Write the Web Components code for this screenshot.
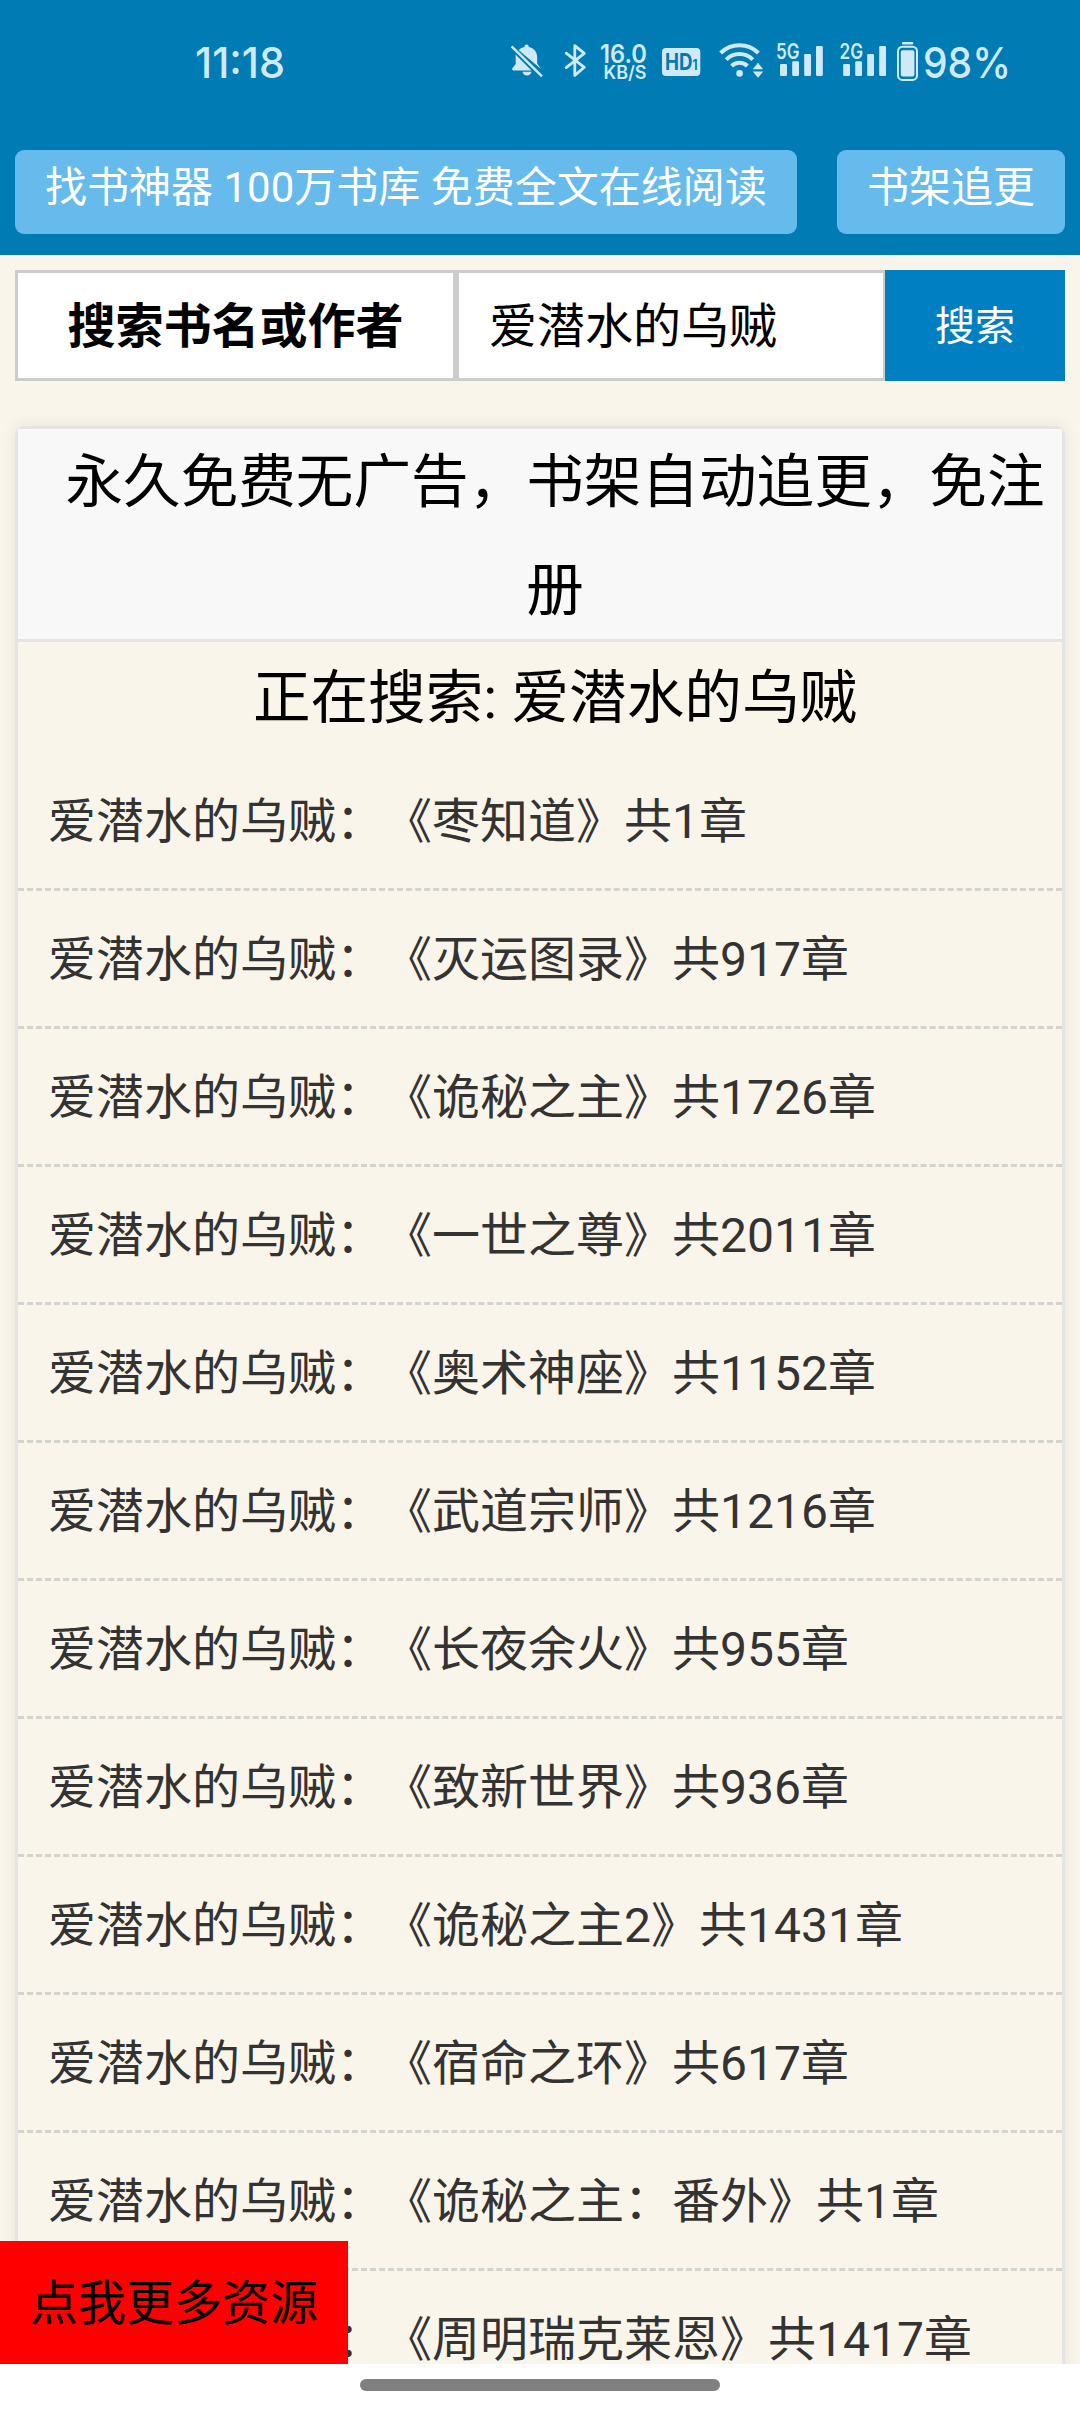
<!DOCTYPE html>
<html lang="zh-CN">
<head>
<meta charset="utf-8">
<title>找书神器</title>
<style>
    html{
        background-color: #fff;
    }
    body{
        margin: 0;
        font-family: Roboto, "Noto Sans CJK SC", sans-serif;
        font-size: 48px;
        color: #000;
        text-spacing-trim: space-all;
        overflow: hidden;
    }
</style>
</head>
<body>
<reader-app></reader-app>

<script>
class BaseElement extends HTMLElement {
    constructor(){
        super();
        this.attachShadow({mode:'open'});
        let template = document.createElement('template');
        template.innerHTML = this.getHTMLAsString();
        this.shadowRoot.appendChild(template.content.cloneNode(true));
    }
}

class StatusBar extends BaseElement {
    getHTMLAsString(){
        return `
        <style>
            :host{
                display: flex;
                justify-content: space-between;
                height: 60px;
                padding: 30px 68px 60px 190px;
            }
            .icons{ display: flex; }
            svg{
                display: block;
                height: 60px;
                fill: #cfeaf6;
                font-family: Inter, sans-serif;
            }
            .line{
                fill: none;
                stroke: #cfeaf6;
            }
        </style>
        <svg width="100" viewBox="190 30 100 60">
            <text x="195" y="77.5" font-size="43" font-weight="500" textLength="90" lengthAdjust="spacingAndGlyphs">11:18</text>
        </svg>
        <div class="icons">
            <svg width="50" viewBox="505 30 50 60">
                <path d="M518.8 50.2c1.4-1.6 3.4-2.7 5.7-3.1v-.6a2.1 2.1 0 0 1 4.2 0v.6c5.2 1 8.5 5 8.5 10.3v6.2l3.8 5.4zM515.5 54.5L531.5 70.5H513.6a1.4 1.4 0 0 1-1.2-2.2l3.3-4.4v-7c0-.8 0-1.6-.2-2.4zM522.5 71.8h9a4.6 4.6 0 0 1-9 0z"/>
                <path class="line" d="M511.6 46.4L542 76.3" stroke-width="2.4"/>
            </svg>
            <svg width="40" viewBox="555 30 40 60">
                <path class="line" d="M566.2 53.2L584.3 67.3 574.8 75.4V45.6L584.3 53.4 566.2 67.6" stroke-width="2.8" stroke-linejoin="round" stroke-linecap="round"/>
            </svg>
            <svg width="60" viewBox="595 30 60 60">
                <text x="600" y="62.6" font-size="25" font-weight="600" textLength="47" lengthAdjust="spacingAndGlyphs">16.0</text>
                <text x="603.5" y="79.2" font-size="18" font-weight="600" textLength="43" lengthAdjust="spacingAndGlyphs">KB/S</text>
            </svg>
            <svg width="55" viewBox="655 30 55 60">
                <rect x="662" y="48" width="38.3" height="28" rx="4"/>
                <text x="665" y="70" font-size="22.5" font-weight="700" textLength="32.5" lengthAdjust="spacingAndGlyphs" fill="#007bb3">HD<tspan font-size="14">1</tspan></text>
            </svg>
            <svg width="60" viewBox="710 30 60 60">
                <g class="line" stroke-width="4">
                    <path d="M720.6 53a27 27 0 0 1 37.8 0"/>
                    <path d="M726.2 59.6a18.6 18.6 0 0 1 26.6 0"/>
                    <path d="M731.6 66a11.4 11.4 0 0 1 15.8 0"/>
                </g>
                <circle cx="739.6" cy="73.4" r="3.3"/>
                <path d="M752.8 69.2L758 62.8 763.2 69.2zM752.8 71.6L758 77.8 763.2 71.6z"/>
            </svg>
            <svg width="62" viewBox="770 30 62 60">
                <text x="776" y="59.3" font-size="21.5" font-weight="600" textLength="23.5" lengthAdjust="spacingAndGlyphs">5G</text>
                <rect x="780" y="64" width="7" height="12" rx="1.2"/>
                <rect x="792.2" y="61.2" width="6.8" height="14.8" rx="1.2"/>
                <rect x="804.2" y="54" width="6.8" height="22" rx="1.2"/>
                <rect x="816" y="46" width="6.8" height="30" rx="1.2"/>
            </svg>
            <svg width="60" viewBox="832 30 60 60">
                <text x="839.5" y="59.3" font-size="21.5" font-weight="600" textLength="23.5" lengthAdjust="spacingAndGlyphs">2G</text>
                <rect x="843.2" y="64" width="6.8" height="12" rx="1.2"/>
                <rect x="855.2" y="61.2" width="6.8" height="14.8" rx="1.2"/>
                <rect x="867.2" y="54" width="6.8" height="22" rx="1.2"/>
                <rect x="879.2" y="46" width="6.8" height="30" rx="1.2"/>
            </svg>
            <svg width="30" viewBox="892 30 30 60">
                <rect x="902" y="42" width="11.3" height="2.4" rx=".8"/>
                <rect class="line" x="898" y="46.7" width="19" height="33.2" rx="4.5" stroke-width="2"/>
                <rect x="900.8" y="50.2" width="13.6" height="26.4" rx="2"/>
            </svg>
            <svg width="90" viewBox="922 30 90 60">
                <text x="923" y="77.8" font-size="43" font-weight="500" textLength="88" lengthAdjust="spacingAndGlyphs">98%</text>
            </svg>
        </div>
        `
    }
}

class PillLink extends BaseElement {
    getHTMLAsString(){
        return `
        <style>
            :host{
                display: block;
                box-sizing: border-box;
                height: 84px;
                padding: 0 30px;
                border-radius: 9px;
                background-color: #66baec;
                color: #fff;
                font-size: 42px;
                line-height: 75px;
                white-space: nowrap;
            }
        </style>
        <slot></slot>
        `
    }
}

class SiteHeader extends BaseElement {
    getHTMLAsString(){
        return `
        <style>
            :host{
                display: block;
                height: 255px;
                background-color: #007bb3;
            }
            nav{
                display: flex;
                justify-content: space-between;
                padding: 0 15px;
            }
        </style>
        <status-bar></status-bar>
        <nav><slot></slot></nav>
        `
    }
}

class SearchForm extends BaseElement {
    getHTMLAsString(){
        return `
        <style>
            :host{
                display: grid;
                grid-template-columns: 441px 429px 180px;
                grid-template-rows: 111px;
                height: 111px;
                margin: 15px 15px 45px;
                line-height: 107px;
            }
            .type, .word{
                box-sizing: border-box;
                height: 111px;
                border: 3px solid #ccc;
                background-color: #fff;
            }
            .type{
                font-weight: bold;
                text-align: center;
            }
            .word{
                padding-left: 30px;
                border-right-width: 2px;
            }
            .submit{
                background-color: #0080c3;
                color: #fff;
                font-size: 40px;
                line-height: 114px;
                height: 111px;
                text-align: center;
            }
        </style>
        <div class="type"><slot name="type"></slot></div>
        <div class="word"><slot name="word"></slot></div>
        <div class="submit"><slot name="submit"></slot></div>
        `
    }
}

class ResultPanel extends BaseElement {
    getHTMLAsString(){
        return `
        <style>
            :host{
                display: block;
                margin: 0 15px;
                border: 3px solid #e4e4e4;
                border-radius: 9px;
                box-shadow: 0 0 15px rgba(0,0,0,0.08);
            }
            .notice, .title{
                padding-left: 30px;
                font-size: 57.6px;
                line-height: 108px;
                text-align: center;
            }
            .notice{
                height: 210px;
                border-bottom: 3px solid #e4e4e4;
                background-color: #f8f8f8;
            }
            .title{
                height: 111px;
                line-height: 113px;
            }
        </style>
        <div class="notice"><slot name="notice"></slot></div>
        <div class="title"><slot name="title"></slot></div>
        <slot></slot>
        `
    }
}

class BookRow extends BaseElement {
    getHTMLAsString(){
        return `
        <style>
            :host{
                display: block;
                height: 135px;
                padding-left: 30px;
                border-bottom: 3px dashed #d3d3d0;
                color: #333;
                line-height: 137px;
                white-space: nowrap;
            }
        </style>
        <slot></slot>
        `
    }
}

class MoreButton extends BaseElement {
    getHTMLAsString(){
        return `
        <style>
            /* floats over the list, in the bottom left corner */
            :host{
                position: absolute;
                left: 0;
                bottom: 0;
                height: 123px;
                padding: 0 30px;
                background-color: #f00;
                line-height: 125px;
            }
        </style>
        <slot></slot>
        `
    }
}

class HomeBar extends BaseElement {
    getHTMLAsString(){
        return `
        <style>
            :host{
                display: flex;
                justify-content: center;
                align-items: center;
                height: 48px;
                background-color: #fff;
            }
            .handle{
                width: 360px;
                height: 12px;
                margin-bottom: 6px;
                border-radius: 6px;
                background-color: #808080;
            }
        </style>
        <div class="handle"></div>
        `
    }
}

class ReaderApp extends BaseElement {
    getHTMLAsString(){
        let author = '爱潜水的乌贼';
        let books = [
            ['枣知道', 1],
            ['灭运图录', 917],
            ['诡秘之主', 1726],
            ['一世之尊', 2011],
            ['奥术神座', 1152],
            ['武道宗师', 1216],
            ['长夜余火', 955],
            ['致新世界', 936],
            ['诡秘之主2', 1431],
            ['宿命之环', 617],
            ['诡秘之主：番外', 1],
            ['周明瑞克莱恩', 1417]
        ];
        let rows = books.map(([name, count]) => `<book-row>${author}：《${name}》共${count}章</book-row>`).join('');
        return `
        <style>
            :host{
                display: flex;
                flex-direction: column;
                width: 1080px;
                height: 2412px;
            }
            main{
                position: relative;
                height: 2364px;
                overflow: hidden;
                background-color: #faf5eb;
            }
        </style>
        <main>
            <site-header>
                <pill-link>找书神器 100万书库 免费全文在线阅读</pill-link>
                <pill-link>书架追更</pill-link>
            </site-header>
            <search-form>
                <span slot="type">搜索书名或作者</span>
                <span slot="word">${author}</span>
                <span slot="submit">搜索</span>
            </search-form>
            <result-panel>
                <span slot="notice">永久免费无广告，书架自动追更，免注册</span>
                <span slot="title">正在搜索: ${author}</span>
                ${rows}
            </result-panel>
            <more-button>点我更多资源</more-button>
        </main>
        <home-bar></home-bar>
        `
    }
}

window.customElements.define('status-bar', StatusBar);
window.customElements.define('pill-link', PillLink);
window.customElements.define('site-header', SiteHeader);
window.customElements.define('search-form', SearchForm);
window.customElements.define('result-panel', ResultPanel);
window.customElements.define('book-row', BookRow);
window.customElements.define('more-button', MoreButton);
window.customElements.define('home-bar', HomeBar);
window.customElements.define('reader-app', ReaderApp);
</script>
</body>
</html>
